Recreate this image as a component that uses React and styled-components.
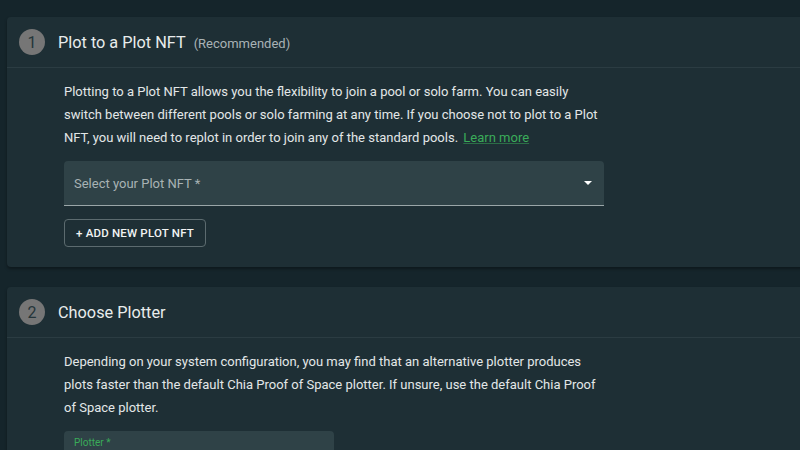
import React from 'react';
import styled, { createGlobalStyle } from 'styled-components';

const GlobalStyle = createGlobalStyle`
  html, body {
    margin: 0;
    padding: 0;
    background: #15252b;
    font-family: Roboto, 'Noto Sans', sans-serif;
    overflow: hidden;
  }
`;

const Page = styled.div`
  display: flex;
  flex-direction: column;
  gap: 20px;
  padding: 17px 0 0 7px;
  width: 820px;
  height: 450px;
  box-sizing: border-box;
  overflow: hidden;
`;

const Card = styled.section`
  flex-shrink: 0;
  background: #1e2f35;
  border-radius: 4px;
  box-shadow: 0 2px 3px rgba(0, 0, 0, 0.35);
`;

const Header = styled.div`
  display: flex;
  align-items: center;
  gap: 13px;
  height: 51px;
  padding-left: 12px;
  border-bottom: 1px solid #2b3c42;
  box-sizing: border-box;
`;

const Step = styled.div`
  width: 26px;
  height: 26px;
  border-radius: 50%;
  background: #767676;
  color: #25353a;
  font-size: 16px;
  display: flex;
  align-items: center;
  justify-content: center;
`;

const Title = styled.h2`
  margin: 0;
  font-size: 16.3px;
  font-weight: 400;
  color: #e8ecec;

  small {
    margin-left: 8px;
    font-size: 13px;
    color: #a9b3b5;
  }
`;

const Body = styled.div`
  padding: 12px 0 20px 57px;
  display: flex;
  flex-direction: column;
  align-items: flex-start;
`;

const Text = styled.p`
  margin: 0;
  width: 540px;
  font-size: 13px;
  line-height: 23px;
  color: #e3e7e8;

  a {
    margin-left: 2px;
    color: #3aac59;
    text-decoration: underline;
    text-decoration-color: rgba(58, 172, 89, 0.5);
  }
`;

const Select = styled.div`
  margin-top: 12px;
  width: ${(p) => p.width}px;
  height: ${(p) => p.height}px;
  background: #2f4247;
  border-radius: 4px 4px 0 0;
  border-bottom: 1px solid #9aa6a8;
  box-sizing: border-box;
  display: flex;
  align-items: ${(p) => (p.small ? 'flex-start' : 'center')};
  justify-content: space-between;
  padding: ${(p) => (p.small ? '6px 10px' : '0 10px')};
`;

const SelectLabel = styled.span`
  font-size: ${(p) => (p.small ? '10px' : '13px')};
  color: ${(p) => (p.small ? '#3aac59' : '#a8b2b4')};
`;

const Arrow = styled.span`
  width: 0;
  height: 0;
  border-left: 4px solid transparent;
  border-right: 4px solid transparent;
  border-top: 4px solid #fff;
  margin-right: 2px;
`;

const Button = styled.button`
  margin-top: 13px;
  height: 28px;
  width: 142px;
  background: transparent;
  border: 1px solid #5c6b6f;
  border-radius: 4px;
  color: #f2f4f4;
  font-family: Roboto, sans-serif;
  font-size: 11.5px;
  font-weight: 500;
  letter-spacing: 0.2px;
  text-transform: uppercase;
`;

const App = () => {
  return (
    <>
      <GlobalStyle />
      <Page>
        <Card>
          <Header>
            <Step>1</Step>
            <Title>
              Plot to a Plot NFT<small>(Recommended)</small>
            </Title>
          </Header>
          <Body>
            <Text>
              Plotting to a Plot NFT allows you the flexibility to join a pool or
              solo farm. You can easily switch between different pools or solo
              farming at any time. If you choose not to plot to a Plot NFT, you
              will need to replot in order to join any of the standard pools.{' '}
              <a href="#">Learn more</a>
            </Text>
            <Select width={540} height={45}>
              <SelectLabel>Select your Plot NFT *</SelectLabel>
              <Arrow />
            </Select>
            <Button>+ Add New Plot NFT</Button>
          </Body>
        </Card>
        <Card>
          <Header>
            <Step>2</Step>
            <Title>Choose Plotter</Title>
          </Header>
          <Body>
            <Text>
              Depending on your system configuration, you may find that an
              alternative plotter produces plots faster than the default Chia
              Proof of Space plotter. If unsure, use the default Chia Proof of
              Space plotter.
            </Text>
            <Select width={270} height={45} small>
              <SelectLabel small>Plotter *</SelectLabel>
            </Select>
          </Body>
        </Card>
      </Page>
    </>
  );
};

export default App;
